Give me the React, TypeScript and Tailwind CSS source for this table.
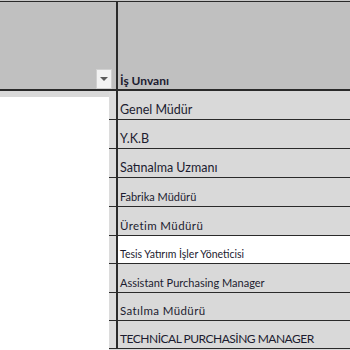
const rows: { label: string; size: string; white?: boolean; h: string }[] = [
  { label: 'Genel Müdür', size: 'text-[12.5px]', h: 'h-[29px]' },
  { label: 'Y.K.B', size: 'text-[12.5px]', h: 'h-[29px]' },
  { label: 'Satınalma Uzmanı', size: 'text-[12.5px]', h: 'h-[29px]' },
  { label: 'Fabrika Müdürü', size: 'text-[11px]', h: 'h-[29px]' },
  { label: 'Üretim Müdürü', size: 'text-[11.5px] tracking-[0.4px]', h: 'h-[29px]' },
  { label: 'Tesis Yatırım İşler Yöneticisi', size: 'text-[10.5px]', white: true, h: 'h-[28px]' },
  { label: 'Assistant Purchasing Manager', size: 'text-[11px]', h: 'h-[29px]' },
  { label: 'Satılma Müdürü', size: 'text-[11.5px] tracking-[0.4px]', h: 'h-[28px]' },
  { label: 'TECHNİCAL PURCHASİNG MANAGER', size: 'text-[12px] tracking-[-0.5px]', h: 'h-[28px]' },
]

export default function App() {
  return (
    <div className="h-[350px] w-[350px] overflow-hidden bg-[#d9d9d9] font-['Lato',sans-serif] text-[#1c1c30]">
      <div className="h-px bg-[#c8c8c8]" />
      <div className="flex h-[90px] border-t border-b-2 border-[#2a2a2a] bg-[#c0c0c0]">
        <div className="relative w-[116px] shrink-0">
          <div className="absolute right-[4px] bottom-0 flex h-[20px] w-[16px] items-center justify-center border border-[#d0d0d0] bg-[#f2f2f2]">
            <div className="h-0 w-0 border-x-[4px] border-t-[4px] border-x-transparent border-t-[#5a5a5a]" />
          </div>
        </div>
        <div className="flex flex-1 items-end border-l-2 border-[#2a2a2a] pb-[1px] pl-[2px] text-[12px] font-bold leading-[14px]">
          İş Unvanı
        </div>
      </div>
      <div className="flex">
        <div className="w-[109px] shrink-0 pt-[6px]">
          <div className="h-[260px] bg-white" />
        </div>
        <div className="flex flex-1 flex-col">
          {rows.map((row) => (
            <div key={row.label} className={`flex ${row.h} border-b border-[#2a2a2a]`}>
              <div className="w-[7px] shrink-0 bg-[#dcdcdc]" />
              <div
                className={`flex flex-1 items-end border-l-2 border-[#2a2a2a] pb-[2px] pl-[2px] leading-[14px] ${row.size} ${row.white ? 'bg-white' : 'bg-[#d9d9d9]'}`}
              >
                {row.label}
              </div>
            </div>
          ))}
        </div>
      </div>
    </div>
  )
}
